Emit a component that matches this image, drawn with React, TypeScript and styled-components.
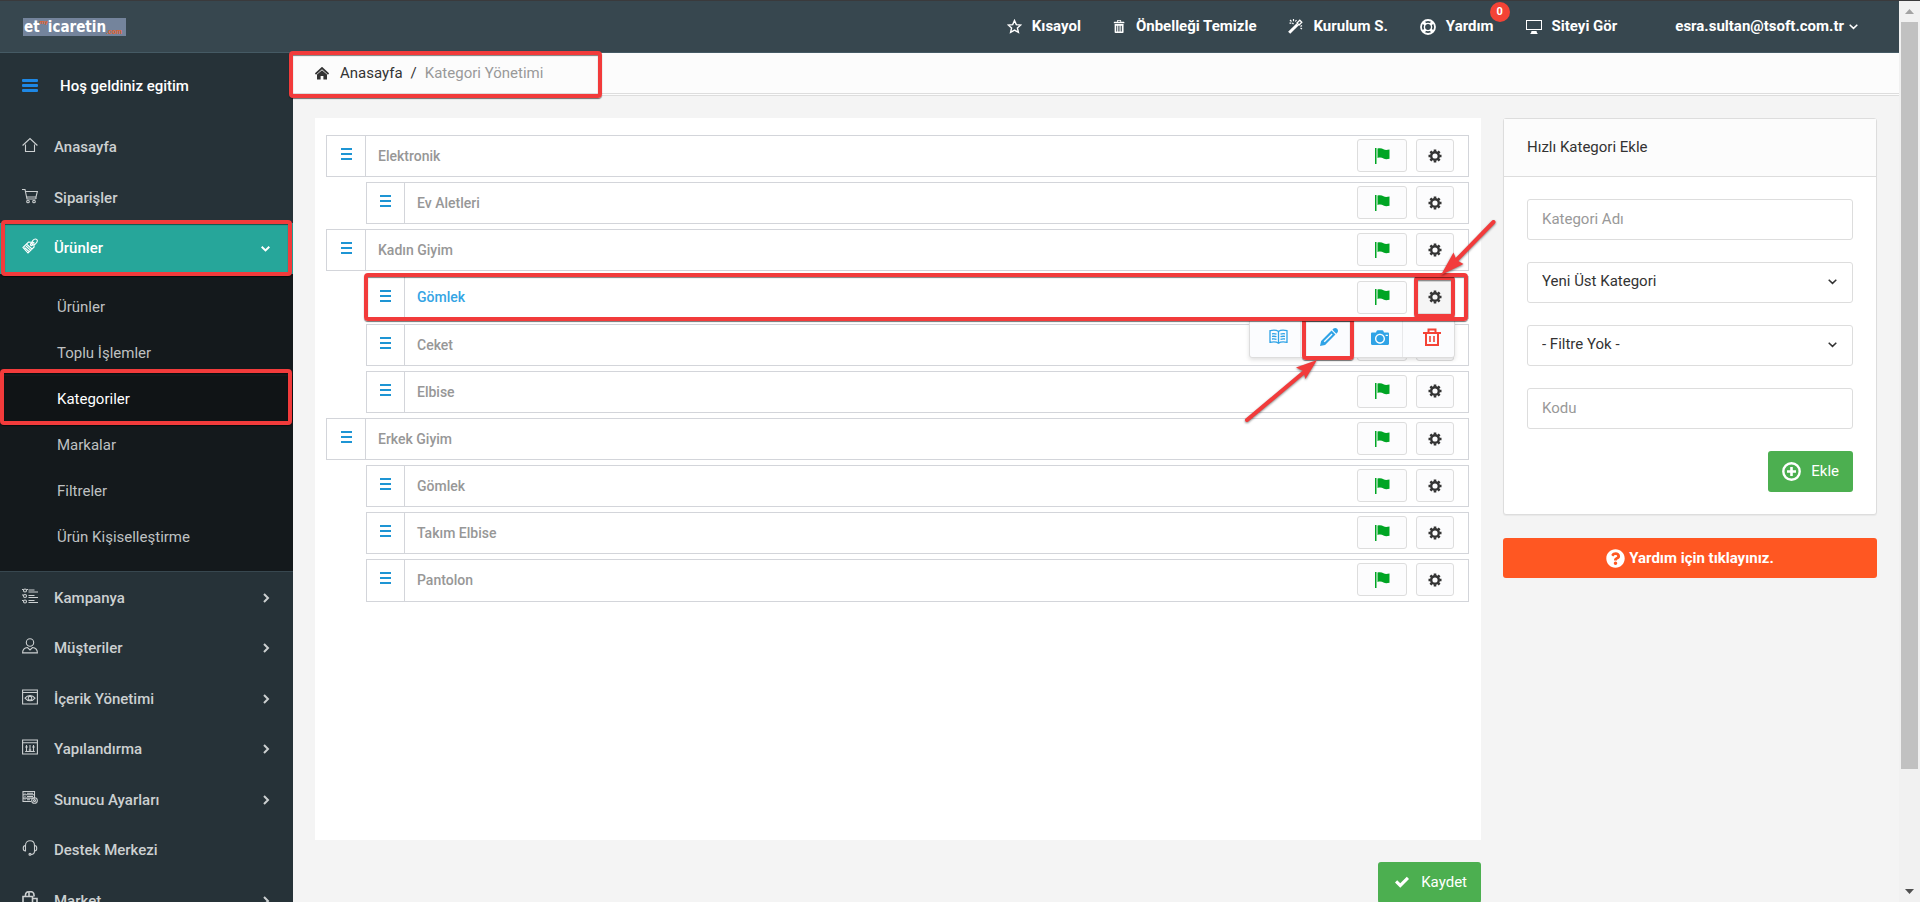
import React from "react";
import styled, { createGlobalStyle, css } from "styled-components";
import { ImBin, ImCamera, ImDisplay, ImPencil, ImCheckmark } from "react-icons/im";
import { FaQuestionCircle } from "react-icons/fa";

const red = "#f23b3b";

const GlobalStyle = createGlobalStyle`
  *, *::before, *::after { box-sizing: border-box; }
  body {
    margin: 0;
    background: #f4f4f4;
    color: #333;
    font-family: Roboto, "Liberation Sans", sans-serif;
    font-size: 15px;
    line-height: 1.5;
  }
  button, input, select { font: inherit; }
  a { color: inherit; text-decoration: none; }
  ul, ol { list-style: none; margin: 0; padding: 0; }
  svg { display: block; flex: none; }
`;

/* ---------- page frame ---------- */

const Page = styled.div`
  display: flex;
  height: 100vh;
  overflow: hidden;
  border-top: 1px solid #3a3a3c;
`;

const Screen = styled.div`
  flex: 1;
  min-width: 0;
  display: flex;
  flex-direction: column;
`;

const ScrollTrack = styled.div`
  flex: none;
  width: 21px;
  padding: 0 2px;
  background: #f1f1f1;
  display: flex;
  flex-direction: column;
  align-items: center;
`;

const ScrollArrow = styled.div<{ $down?: boolean }>`
  height: 21px;
  display: flex;
  align-items: center;
  color: ${(p) => (p.$down ? "#505050" : "#a3a3a3")};
`;

const ScrollSpace = styled.div`
  flex: 1;
  width: 100%;
`;

const ScrollThumb = styled.div`
  width: 100%;
  height: 87%;
  background: #c1c1c1;
`;

/* ---------- callouts ---------- */

const Highlight = styled.span<{ $inset: string }>`
  position: absolute;
  inset: ${(p) => p.$inset};
  z-index: 5;
  border: 4px solid ${red};
  border-radius: 4px;
  box-shadow: 0 1px 1px rgba(0, 0, 0, 0.55), inset 0 1px 1px rgba(0, 0, 0, 0.5);
  pointer-events: none;
`;

const ArrowSvg = styled.svg<{ $left: number; $top: number }>`
  position: absolute;
  left: ${(p) => p.$left}px;
  top: ${(p) => p.$top}px;
  z-index: 6;
  overflow: visible;
  filter: drop-shadow(0 1px 1px rgba(0, 0, 0, 0.5));
  pointer-events: none;
`;

/* ---------- top bar ---------- */

const TopBar = styled.header`
  flex: none;
  height: 52px;
  padding: 0 41px 0 23px;
  display: flex;
  align-items: center;
  justify-content: space-between;
  background: #37474f;
  border-bottom: 1px solid #455a64;
  color: #fff;
`;

const Logo = styled.a`
  display: flex;
  align-items: flex-end;
  width: 103px;
  height: 18px;
  padding-left: 1px;
  background: #74849c;
  color: #fff;
  font: bold 15px/17px "DejaVu Sans Condensed", "DejaVu Sans", sans-serif;
`;

const LogoMy = styled.small`
  align-self: flex-start;
  color: #e8622c;
  font: bold 6px/8px Roboto, sans-serif;
`;

const LogoCom = styled.small`
  color: #e8622c;
  font: bold 7px/8px Roboto, sans-serif;
`;

const TopNav = styled.nav`
  display: flex;
  align-items: center;
  gap: 32px;
  font-weight: 700;
`;

const TopLink = styled.a`
  position: relative;
  display: flex;
  align-items: center;
  gap: 10px;
`;

const Account = styled(TopLink)`
  gap: 5px;
  margin-left: 26px;
`;

const Badge = styled.span`
  position: absolute;
  right: -16px;
  top: -13px;
  min-width: 20px;
  height: 20px;
  border-radius: 10px;
  background: #f44336;
  font-size: 11px;
  line-height: 20px;
  text-align: center;
`;

/* ---------- sidebar ---------- */

const Columns = styled.div`
  flex: 1;
  min-height: 0;
  display: flex;
`;

const Sidebar = styled.nav`
  position: relative;
  z-index: 2;
  flex: none;
  width: 293px;
  background: #263238;
  color: #ccd0d1;
  font-weight: 500;
`;

const Welcome = styled.div`
  display: flex;
  align-items: center;
  gap: 22px;
  height: 69px;
  padding: 0 22px 2px;
  color: #fff;

  > svg {
    margin-bottom: 2px;
  }
`;

const MenuItem = styled.li<{ $ruled?: boolean }>`
  position: relative;
  ${(p) =>
    p.$ruled &&
    css`
      padding-top: 1px;
      border-top: 1px solid #37474f;
    `}
`;

const MenuLink = styled.a<{ $active?: boolean }>`
  display: flex;
  align-items: center;
  gap: 16px;
  padding: 14px 23px 14px 22px;
  ${(p) =>
    p.$active &&
    css`
      background: #26a69a;
      color: #fff;
    `}

  > svg:first-child {
    margin-bottom: 4px;
  }
`;

const MenuLabel = styled.span`
  flex: 1;
`;

const SubMenu = styled.ul`
  padding: 10px 0 11px;
  background: #14191c;
  color: #bfc1c2;
  font-weight: 400;
`;

const SubItem = styled.li<{ $active?: boolean }>`
  position: relative;
  ${(p) =>
    p.$active &&
    css`
      background: #101416;
      color: #fff;
    `}
`;

const SubLink = styled.a`
  display: block;
  padding: 12px 20px 12px 57px;
  line-height: 22px;
`;

/* ---------- content ---------- */

const Content = styled.main`
  flex: 1;
  min-width: 0;
`;

const Breadcrumb = styled.nav`
  position: relative;
  display: flex;
  align-items: center;
  gap: 8px;
  height: 43px;
  padding: 0 22px;
  background: #fcfcfc;
  border-bottom: 3px double #ddd;
`;

const Current = styled.span`
  color: #999;
`;

const HomeLink = styled.a`
  display: flex;
  align-items: center;
  gap: 11px;
`;

const Grid = styled.div`
  display: grid;
  grid-template-columns: repeat(4, minmax(0, 1fr));
  gap: 22px;
  padding: 22px;
`;

const TreeColumn = styled.section`
  grid-column: span 3;
`;

const Tree = styled.ul`
  min-height: 722px;
  padding: 17px 12px 17px 11px;
  background: #fff;
`;

const Row = styled.li<{ $nested?: boolean }>`
  position: relative;
  display: flex;
  align-items: center;
  margin-bottom: 5px;
  margin-left: ${(p) => (p.$nested ? 40 : 0)}px;
  padding-right: 14px;
  border: 1px solid #d3d5da;
  font-size: 14px;
  font-weight: 500;
  line-height: 1.44;
`;

const Handle = styled.span<{ $nested?: boolean }>`
  align-self: stretch;
  display: flex;
  align-items: center;
  justify-content: center;
  width: ${(p) => (p.$nested ? 38 : 39)}px;
  padding-bottom: 4px;
  border-right: 1px solid #d3d5da;
  color: #1e95d4;
`;

const RowName = styled.a<{ $open?: boolean }>`
  flex: 1;
  padding: 10px 12px;
  color: ${(p) => (p.$open ? "#35a4e4" : "#979797")};
`;

const RowTools = styled.div`
  display: flex;
  gap: 9px;
  height: 33px;
  margin-bottom: 1px;
`;

const ToolButton = styled.button<{ $wide?: boolean; $open?: boolean }>`
  position: relative;
  display: flex;
  align-items: center;
  justify-content: center;
  width: ${(p) => (p.$wide ? 50 : 38)}px;
  padding: 0;
  border: 1px solid #ddd;
  border-radius: 3px;
  background: ${(p) => (p.$open ? "#f5f5f5" : "#fcfcfd")};
  color: ${(p) => (p.$wide ? "#00a524" : "#333")};
`;

const Popover = styled.div`
  position: absolute;
  right: 13px;
  top: 41px;
  z-index: 4;
  display: grid;
  grid-template-columns: repeat(4, 51px);
  height: 40px;
  border: 1px solid #ddd;
  border-radius: 3px;
  background: #fbfcfe;
  box-shadow: 0 2px 4px rgba(0, 0, 0, 0.12);
`;

const PopoverButton = styled.button<{ $danger?: boolean }>`
  position: relative;
  display: flex;
  align-items: center;
  justify-content: center;
  padding: 0 0 3px 6px;
  border: 0;
  border-right: 1px solid #e8e9eb;
  background: none;
  color: ${(p) => (p.$danger ? "#f44336" : "#2fa3e6")};

  &:last-child {
    border-right: 0;
  }
`;

const Save = styled.div`
  display: flex;
  justify-content: flex-end;
  margin-top: 22px;
`;

const GreenButton = styled.button`
  display: flex;
  align-items: center;
  gap: 10px;
  height: 41px;
  padding: 0 14px;
  border: 0;
  border-radius: 3px;
  background: #4caf50;
  color: #fff;
`;

const SaveButton = styled(GreenButton)`
  gap: 12px;
  padding: 0 14px 0 17px;
  border-bottom: 1px solid #43a047;
`;

/* ---------- quick add ---------- */

const Card = styled.form`
  border: 1px solid #ddd;
  border-radius: 3px;
  background: #fff;
  box-shadow: 0 1px 1px rgba(0, 0, 0, 0.05);
`;

const CardTitle = styled.h2`
  margin: 0;
  padding: 18px 23px;
  border-bottom: 1px solid #ddd;
  background: #fcfcfc;
  font-size: 15px;
  font-weight: 400;
  line-height: 21px;
`;

const CardBody = styled.div`
  display: flex;
  flex-direction: column;
  gap: 22px;
  padding: 22px 23px;

  > button {
    align-self: flex-end;
  }
`;

const field = css`
  display: block;
  width: 100%;
  height: 41px;
  padding: 0 14px 2px;
  border: 1px solid #ddd;
  border-radius: 3px;
  background: #fff;
  color: #333;
`;

const TextInput = styled.input`
  ${field}
  &::placeholder {
    color: #999;
    opacity: 1;
  }
`;

const SelectBox = styled.div`
  position: relative;

  > svg {
    position: absolute;
    right: 16px;
    top: 15px;
    pointer-events: none;
  }
`;

const Select = styled.select`
  ${field}
  appearance: none;
`;

const HelpButton = styled.a`
  display: flex;
  align-items: center;
  justify-content: center;
  gap: 4px;
  height: 40px;
  margin-top: 23px;
  border-radius: 3px;
  background: #ff5722;
  color: #fff;
  font-weight: 700;
`;

/* ---------- icons ---------- */

const Chevron = ({ side, weight = 2 }: { side?: boolean; weight?: number }) =>
  side ? (
    <svg width="7" height="10" viewBox="0 0 7 10" fill="none" stroke="currentColor" strokeWidth={weight}>
      <path d="M1 1l4 4-4 4" />
    </svg>
  ) : (
    <svg width="9" height="9" viewBox="0 0 9 9" fill="none" stroke="currentColor" strokeWidth={weight}>
      <path d="M.7 2.8l3.8 3.6 3.8-3.6" />
    </svg>
  );

const Bars = () => (
  <svg width="11" height="12" viewBox="0 0 11 12" fill="currentColor">
    <path d="M0 0h11v2H0zM0 5h11v2H0zM0 10h11v2H0z" />
  </svg>
);

const MenuBars = () => (
  <svg width="16" height="14" viewBox="0 0 16 14" fill="#1e88e5">
    <rect width="16" height="3" rx="1" />
    <rect y="5" width="16" height="3" rx="1" />
    <rect y="10" width="16" height="3" rx="1" />
  </svg>
);

const LineIcon = ({ children }: { children: React.ReactNode }) => (
  <svg width="16" height="16" viewBox="0 0 16 16" fill="none" stroke="currentColor" strokeWidth="1.1">
    {children}
  </svg>
);

const icons = {
  home: <path d="M3.5 7.5v7h9v-7M.6 8.5L8 1.5l7.400 7" />,
  cart: (
    <>
      <path d="M0 1.500h3l2 9.500h8.500M3.300 3.500H15.400L14 9H4.800M14 9v2" />
      <circle cx="6" cy="13.500" r="1.300" />
      <circle cx="12" cy="13.500" r="1.300" />
    </>
  ),
  tag: (
    <>
      <path d="M1 9.500L6.500 4l5.300.5.3 4.500L6 15zM2.500 9.500l4.500 4M4 8l4.500 4.200M5 6.500l5 4.500" />
      <circle cx="9.500" cy="6.500" r="1.100" />
      <path d="M9.500 6.500c0-3 2-5.500 4-5.500s2.200 2 1.200 3.500-2.500 2.500-3.500 2.500" />
    </>
  ),
  list: (
    <>
      <circle cx="3" cy="2.500" r="1.500" />
      <circle cx="3" cy="8" r="1.500" />
      <circle cx="3" cy="13.500" r="1.500" />
      <path d="M0 1.500h1.500M4.500 1.500H6M0 7h1.500M0 12.500h1.500M6.500 2h6M6.500 4h9.500M6.500 7.500h6M6.500 9.500h9.500M6.500 12.500h6M6.500 14.500h9.500" />
    </>
  ),
  user: (
    <>
      <circle cx="8" cy="4.500" r="3.700" />
      <path d="M5.500 9.500C2.500 9.800.6 11.500.6 14.900h14.800c0-3.400-1.900-5.100-4.900-5.400L8 12z" />
    </>
  ),
  eye: (
    <>
      <path d="M.6 1h14.800v14H.6zM.6 3.500h14.800M3 9.200C5.500 5.800 10.500 5.800 13 9.200 10.500 12.500 5.500 12.500 3 9.200z" />
      <circle cx="8" cy="9.200" r="1.800" />
    </>
  ),
  sliders: (
    <path d="M.6 1h14.800v14H.6zM.6 3.800h14.800M4.500 6v7M8 6v7M11.500 6v7M3.200 8h2.600M6.700 11h2.600M10.200 8h2.600M3.200 12.500h9.600" />
  ),
  server: (
    <>
      <path d="M1 1.500h11.500v3.300H1zM1 4.800h11.500v3.300H1zM9 11.500H1V8.100h9M2.500 3.200h1M5 3.200h6M2.500 6.500h1M5 6.500h6M2.500 9.800h1M5 9.800h3" />
      <circle cx="12.500" cy="10.500" r="2.800" />
      <circle cx="12.500" cy="10.500" r="1" />
    </>
  ),
  headset: (
    <>
      <path d="M3.500 5.500C3.500-.8 12.500-.8 12.500 5.500M3.500 5.500C.5 5.500.5 11 3.500 11zM12.500 5.500c3 0 3 5.500 0 5.500zM12.500 11c0 2.500-1.500 3.500-3.500 3.500" />
      <circle cx="8" cy="14.300" r="1" />
    </>
  ),
  market: <path strokeWidth="1.600" d="M1 5.500h9.500V15H1zM3.500 5.500C3 1 6 .8 6.500 1c3-1 6 0 5.500 4.500M7 5.500V1M10.500 7.500H15V15h-4.500" />,
};

const HomeSolid = () => (
  <svg width="14" height="13" viewBox="0 0 14 13">
    <path d="M.4 7L7 1l6.600 6" fill="none" stroke="#333" strokeWidth="1.800" />
    <path d="M2 7.600L7 3.200l5 4.400V12.500H8.400V9H5.600v3.500H2z" fill="#333" />
  </svg>
);

const StarIcon = () => (
  <svg width="15" height="15" viewBox="0 0 15 15" fill="none" stroke="#fff" strokeWidth="1.400">
    <path d="M7.500 1.500l1.800 4.100 4.500.4-3.400 3 1 4.400-3.900-2.300-3.900 2.300 1-4.400-3.400-3 4.500-.4z" />
  </svg>
);

const WandIcon = () => (
  <svg width="15" height="15" viewBox="0 0 15 15" fill="none" stroke="#fff">
    <path d="M1.200 13.800l8.300-8.300" strokeWidth="3" />
    <path d="M9 4l2 2 2.800-2.800-2-2z" strokeWidth="1.300" />
    <path d="M2 1l1.500 1.500M5.500 0v2.200M8.500 1L7.300 2.500M5.500 5L4.300 3.800M1.500 4.200h1.800M14 6.500l-1.500 1M14 10l-1.500-1" strokeWidth="1.200" />
  </svg>
);

const Lifebuoy = () => (
  <svg width="16" height="16" viewBox="0 0 16 16" fill="none" stroke="#fff">
    <circle cx="8" cy="8" r="7" strokeWidth="1.800" />
    <circle cx="8" cy="8" r="3.600" strokeWidth="1.400" />
    <path d="M2.800 2.800l3 3M13.200 2.800l-3 3M2.800 13.200l3-3M13.200 13.200l-3-3" strokeWidth="3" />
  </svg>
);

const FlagIcon = () => (
  <svg width="16" height="16" viewBox="0 0 16 16" fill="currentColor">
    <path d="M1 0h1.500v16H1z" />
    <path d="M3.500 0.500C6 -.2 8 .2 9.500 1.200S13 2 15.500 1.500v9.300c-2.500.6-4.500.6-6-.3s-3.500-1.300-6-.5z" />
  </svg>
);

const GearIcon = () => (
  <svg width="14" height="14" viewBox="0 0 14 14" fill="none" stroke="currentColor">
    <circle cx="7" cy="7" r="3.800" strokeWidth="2.400" />
    <path
      d="M7 .5V2.500M7 11.500v2M.5 7h2M11.500 7h2M2.400 2.400l1.400 1.400M10.200 10.200l1.400 1.400M11.600 2.400l-1.400 1.400M3.800 10.200l-1.400 1.400"
      strokeWidth="2.600"
    />
  </svg>
);

const BookIcon = () => (
  <svg width="19" height="16" viewBox="0 0 19 16" fill="none" stroke="currentColor" strokeWidth="1.300">
    <path d="M9.500 2.500C7.500 1 4 1 1 1.700v11.600c3-.6 6.500-.6 8.500.9 2-1.500 5.500-1.500 8.500-.9V1.700C15 1 11.500 1 9.500 2.500zM9.500 2.500v12" />
    <path d="M3 4.800c1.800-.3 3-.2 4.500.3M3 7.400c1.800-.3 3-.2 4.500.3M3 10c1.800-.3 3-.2 4.500.3M16 4.800c-1.800-.3-3-.2-4.500.3M16 7.400c-1.800-.3-3-.2-4.500.3M16 10c-1.800-.3-3-.2-4.500.3" />
  </svg>
);

const TrashIcon = () => (
  <svg width="18" height="18" viewBox="0 0 18 18" fill="none" stroke="currentColor" strokeWidth="2">
    <path d="M0 5h18M5.500 5V1.500h7V5M3 5v12h12V5" />
    <path d="M7 8v6M11 8v6" strokeWidth="1.600" />
  </svg>
);

const PlusCircle = () => (
  <svg width="19" height="19" viewBox="0 0 19 19" fill="none" stroke="#fff">
    <circle cx="9.500" cy="9.500" r="8.200" strokeWidth="2.400" />
    <path d="M9.500 5v9M5 9.500h9" strokeWidth="2.600" />
  </svg>
);

/* ---------- data ---------- */

type Entry = { label: string; icon: keyof typeof icons; expandable?: boolean };

const before: Entry[] = [
  { label: "Anasayfa", icon: "home" },
  { label: "Siparişler", icon: "cart" },
];

const productLinks = ["Ürünler", "Toplu İşlemler", "Kategoriler", "Markalar", "Filtreler", "Ürün Kişiselleştirme"];

const after: Entry[] = [
  { label: "Kampanya", icon: "list", expandable: true },
  { label: "Müşteriler", icon: "user", expandable: true },
  { label: "İçerik Yönetimi", icon: "eye", expandable: true },
  { label: "Yapılandırma", icon: "sliders", expandable: true },
  { label: "Sunucu Ayarları", icon: "server", expandable: true },
  { label: "Destek Merkezi", icon: "headset" },
  { label: "Market", icon: "market", expandable: true },
];

const categories = [
  { name: "Elektronik" },
  { name: "Ev Aletleri", nested: true },
  { name: "Kadın Giyim" },
  { name: "Gömlek", nested: true, open: true },
  { name: "Ceket", nested: true },
  { name: "Elbise", nested: true },
  { name: "Erkek Giyim" },
  { name: "Gömlek", nested: true },
  { name: "Takım Elbise", nested: true },
  { name: "Pantolon", nested: true },
];

/* ---------- parts ---------- */

const ProductsFrame = styled(Highlight)`
  height: 56px;
`;

const CrumbFrame = styled(Highlight)`
  width: 313px;
`;

const MenuEntry = ({ entry, ruled }: { entry: Entry; ruled?: boolean }) => (
  <MenuItem $ruled={ruled}>
    <MenuLink href="#">
      <LineIcon>{icons[entry.icon]}</LineIcon>
      <MenuLabel>{entry.label}</MenuLabel>
      {entry.expandable && <Chevron side />}
    </MenuLink>
  </MenuItem>
);

const CategoryRow = ({ name, nested, open }: { name: string; nested?: boolean; open?: boolean }) => (
  <Row $nested={nested}>
    <Handle $nested={nested}>
      <Bars />
    </Handle>
    <RowName href="#" $open={open}>
      {name}
    </RowName>
    <RowTools>
      <ToolButton type="button" $wide aria-label="Durum">
        <FlagIcon />
      </ToolButton>
      <ToolButton type="button" $open={open} aria-label="Ayarlar">
        <GearIcon />
        {open && (
          <>
            <Highlight $inset="-6px -2px -5px -3px" />
            <ArrowSvg $left={24} $top={-61} width="54" height="54" viewBox="0 0 54 54">
              <path d="M52.500 1L15 39.500" stroke={red} strokeWidth="4" strokeLinecap="round" />
              <path d="M0 54L12.500 31.500l3 7.500 7 4z" fill={red} />
            </ArrowSvg>
          </>
        )}
      </ToolButton>
    </RowTools>
    {open && (
      <>
        <Popover>
          <PopoverButton type="button" aria-label="Detay">
            <BookIcon />
          </PopoverButton>
          <PopoverButton type="button" aria-label="Düzenle">
            <ImPencil size={18} />
            <Highlight $inset="-2px -3px -3px 1px" />
            <ArrowSvg $left={-56} $top={41} width="72" height="62" viewBox="0 0 72 62">
              <path d="M2 60L58 13" stroke={red} strokeWidth="4" strokeLinecap="round" />
              <path d="M72 0L51 7.500l7 3.500 2.500 8z" fill={red} />
            </ArrowSvg>
          </PopoverButton>
          <PopoverButton type="button" aria-label="Resim">
            <ImCamera size={18} />
          </PopoverButton>
          <PopoverButton type="button" $danger aria-label="Sil">
            <TrashIcon />
          </PopoverButton>
        </Popover>
        <Highlight $inset="-4px 0 -3px -3px" />
      </>
    )}
  </Row>
);

const App = () => (
  <>
    <GlobalStyle />
    <Page>
      <Screen>
        <TopBar>
          <Logo href="#">
            <span>et</span>
            <LogoMy>my</LogoMy>
            <span>icaretin</span>
            <LogoCom>.com</LogoCom>
          </Logo>
          <TopNav>
            <TopLink href="#">
              <StarIcon />
              Kısayol
            </TopLink>
            <TopLink href="#">
              <ImBin size={13} />
              Önbelleği Temizle
            </TopLink>
            <TopLink href="#">
              <WandIcon />
              Kurulum S.
            </TopLink>
            <TopLink href="#">
              <Lifebuoy />
              Yardım
              <Badge>0</Badge>
            </TopLink>
            <TopLink href="#">
              <ImDisplay size={16} />
              Siteyi Gör
            </TopLink>
            <Account href="#">
              esra.sultan@tsoft.com.tr
              <Chevron weight={1.5} />
            </Account>
          </TopNav>
        </TopBar>
        <Columns>
          <Sidebar>
            <Welcome>
              <MenuBars />
              Hoş geldiniz egitim
            </Welcome>
            <ul>
              {before.map((entry) => (
                <MenuEntry key={entry.label} entry={entry} />
              ))}
              <MenuItem>
                <MenuLink href="#" $active>
                  <LineIcon>{icons.tag}</LineIcon>
                  <MenuLabel>Ürünler</MenuLabel>
                  <Chevron />
                  <ProductsFrame $inset="-3px 1px auto 1px" />
                </MenuLink>
                <SubMenu>
                  {productLinks.map((label) => (
                    <SubItem key={label} $active={label === "Kategoriler"}>
                      <SubLink href="#">{label}</SubLink>
                      {label === "Kategoriler" && <Highlight $inset="-7px 1px -3px 0" />}
                    </SubItem>
                  ))}
                </SubMenu>
              </MenuItem>
              {after.map((entry, i) => (
                <MenuEntry key={entry.label} entry={entry} ruled={i === 0} />
              ))}
            </ul>
          </Sidebar>
          <Content>
            <Breadcrumb>
              <HomeLink href="#">
                <HomeSolid />
                Anasayfa
              </HomeLink>
              <span>/</span>
              <Current>Kategori Yönetimi</Current>
              <CrumbFrame $inset="-2px auto -5px -4px" />
            </Breadcrumb>
            <Grid>
              <TreeColumn>
                <Tree>
                  {categories.map((category, i) => (
                    <CategoryRow key={i} {...category} />
                  ))}
                </Tree>
                <Save>
                  <SaveButton type="button">
                    <ImCheckmark size={14} />
                    Kaydet
                  </SaveButton>
                </Save>
              </TreeColumn>
              <aside>
                <Card>
                  <CardTitle>Hızlı Kategori Ekle</CardTitle>
                  <CardBody>
                    <TextInput aria-label="Kategori Adı" placeholder="Kategori Adı" />
                    <SelectBox>
                      <Select aria-label="Üst kategori">
                        <option>Yeni Üst Kategori</option>
                      </Select>
                      <Chevron weight={1.5} />
                    </SelectBox>
                    <SelectBox>
                      <Select aria-label="Filtre">
                        <option>- Filtre Yok -</option>
                      </Select>
                      <Chevron weight={1.5} />
                    </SelectBox>
                    <TextInput aria-label="Kodu" placeholder="Kodu" />
                    <GreenButton type="button">
                      <PlusCircle />
                      Ekle
                    </GreenButton>
                  </CardBody>
                </Card>
                <HelpButton href="#">
                  <FaQuestionCircle size={19} />
                  Yardım için tıklayınız.
                </HelpButton>
              </aside>
            </Grid>
          </Content>
        </Columns>
      </Screen>
      <ScrollTrack>
        <ScrollArrow>
          <svg width="9" height="5" viewBox="0 0 9 5" fill="currentColor">
            <path d="M0 5L4.500 0 9 5z" />
          </svg>
        </ScrollArrow>
        <ScrollSpace>
          <ScrollThumb />
        </ScrollSpace>
        <ScrollArrow $down>
          <svg width="9" height="5" viewBox="0 0 9 5" fill="currentColor">
            <path d="M0 0l4.500 5L9 0z" />
          </svg>
        </ScrollArrow>
      </ScrollTrack>
    </Page>
  </>
);

export default App;
